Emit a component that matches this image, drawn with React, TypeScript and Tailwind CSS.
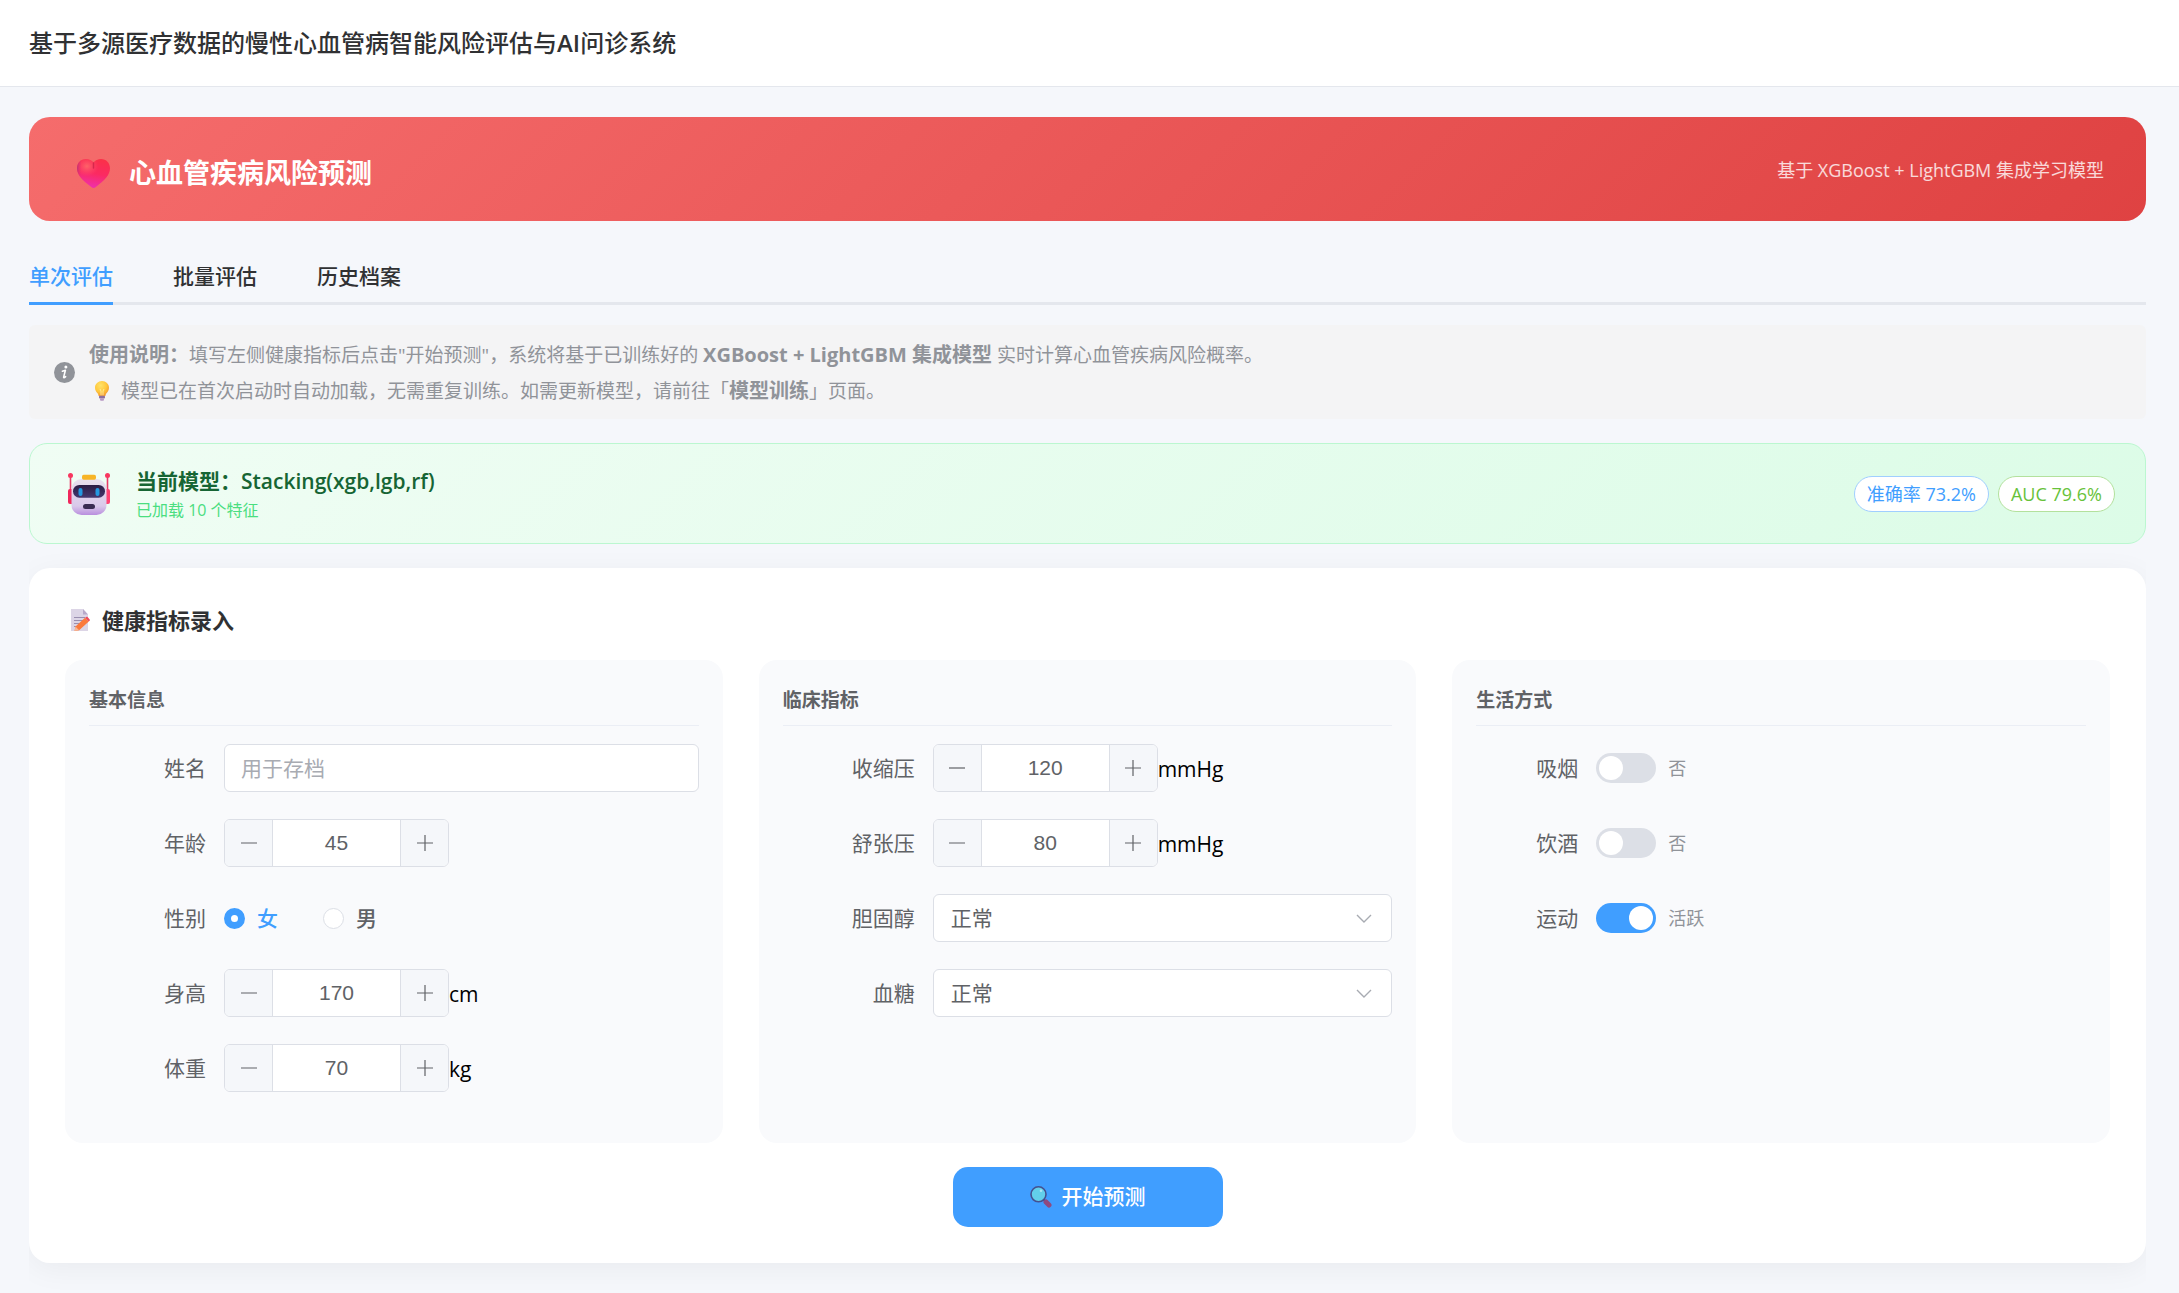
import React, { useState } from 'react';

const tabs = ['单次评估', '批量评估', '历史档案'];

const HeartIcon = () => (
  <svg viewBox="0 0 33 29" className="w-[33px] h-[29px]" aria-hidden="true">
    <defs>
      <linearGradient id="heart" x1="0.6" y1="0" x2="0.4" y2="1">
        <stop offset="0" stopColor="#fb3049" />
        <stop offset="0.5" stopColor="#fb2a62" />
        <stop offset="1" stopColor="#ee30b0" />
      </linearGradient>
      <radialGradient id="heartLight" cx="0.3" cy="0.25" r="0.35">
        <stop offset="0" stopColor="#ff6a68" stopOpacity="0.9" />
        <stop offset="1" stopColor="#ff4f75" stopOpacity="0" />
      </radialGradient>
      <linearGradient id="heartSide" x1="0" y1="0.4" x2="1" y2="0.5">
        <stop offset="0" stopColor="#b0347c" stopOpacity="0.75" />
        <stop offset="0.25" stopColor="#e0306f" stopOpacity="0" />
      </linearGradient>
    </defs>
    <path fill="url(#heart)" d="M16.5 3.5C14.7 1.2 12 0 9 0 3.6 0 0 4.200 0 9.300c0 6.700 5.500 12.200 14.300 18.800 1.600 1.200 2.900 1.200 4.500 0C27.500 21.500 33 16 33 9.300 33 4.200 29.400 0 24 0c-3 0-5.700 1.200-7.500 3.500z" />
    <path fill="url(#heartLight)" d="M16.5 3.5C14.7 1.2 12 0 9 0 3.6 0 0 4.200 0 9.300c0 6.700 5.500 12.200 14.300 18.800 1.600 1.200 2.900 1.200 4.500 0C27.500 21.500 33 16 33 9.300 33 4.200 29.400 0 24 0c-3 0-5.700 1.200-7.500 3.500z" />
    <path fill="url(#heartSide)" d="M16.500 3.500C14.700 1.200 12 0 9 0 3.600 0 0 4.200 0 9.300c0 6.700 5.500 12.200 14.300 18.800L16.500 29z" />
    <path d="M16.500 4v5" stroke="#c61f45" strokeWidth="1.400" strokeLinecap="round" opacity="0.7" />
  </svg>
);

const InfoIcon = () => (
  <svg viewBox="0 0 21 21" className="w-[21px] h-[21px] shrink-0" aria-hidden="true">
    <circle cx="10.500" cy="10.500" r="10.500" fill="#909399" />
    <circle cx="11.900" cy="5" r="1.500" fill="#fff" />
    <path d="M8.400 9.200l3-.9-1.700 6.600c-.2 1 .3 1.200 1.900-.3" fill="none" stroke="#fff" strokeWidth="1.600" strokeLinecap="round" strokeLinejoin="round" />
  </svg>
);

const BulbIcon = () => (
  <svg viewBox="0 0 14 20" className="w-[14px] h-5" aria-hidden="true">
    <defs>
      <radialGradient id="bulb" cx="0.4" cy="0.3" r="0.7">
        <stop offset="0" stopColor="#ffe36a" />
        <stop offset="0.6" stopColor="#ffc83d" />
        <stop offset="1" stopColor="#f59b2e" />
      </radialGradient>
    </defs>
    <path fill="url(#bulb)" d="M7 0C3.100 0 0 3 0 6.700c0 2.600 1.400 4.200 2.500 5.600.6.800 1 1.500 1.100 2.700h6.800c.1-1.200.5-1.900 1.100-2.700C12.600 10.900 14 9.300 14 6.700 14 3 10.900 0 7 0z" />
    <path d="M5 8l1 2v4.500M9 8l-1 2v4.500" fill="none" stroke="#fff0b0" strokeWidth="0.800" />
    <rect x="4" y="14.800" width="6" height="2.800" rx="1" fill="#8d6f9e" />
    <rect x="5" y="17.500" width="4" height="2.300" rx="1.100" fill="#b796c4" />
  </svg>
);

const RobotIcon = () => (
  <svg viewBox="0 0 42 42" className="w-[42px] h-[42px]" aria-hidden="true">
    <defs>
      <linearGradient id="robotHead" x1="0" y1="0" x2="0" y2="1">
        <stop offset="0" stopColor="#e9e0ee" />
        <stop offset="0.75" stopColor="#d9c9ea" />
        <stop offset="1" stopColor="#b98ede" />
      </linearGradient>
      <linearGradient id="robotVisor" x1="0" y1="0" x2="0" y2="1">
        <stop offset="0" stopColor="#2b1c44" />
        <stop offset="1" stopColor="#45386f" />
      </linearGradient>
    </defs>
    <path d="M2.500 3v16M39.500 3v16" stroke="#e63a68" strokeWidth="1.600" />
    <circle cx="2.500" cy="2.500" r="2.500" fill="#f8375f" />
    <circle cx="39.500" cy="2.500" r="2.500" fill="#f8375f" />
    <rect x="0" y="16" width="6" height="15" rx="2" fill="#f0285c" />
    <rect x="36" y="16" width="6" height="15" rx="2" fill="#ff4273" />
    <rect x="3.500" y="6" width="35" height="36" rx="10" fill="url(#robotHead)" />
    <rect x="14" y="1.700" width="14" height="5" rx="1.700" fill="#f7b526" />
    <rect x="5" y="12" width="32" height="12.700" rx="6.300" fill="url(#robotVisor)" />
    <rect x="10.500" y="15" width="4" height="8" rx="2" fill="#2498e0" />
    <rect x="27.500" y="15" width="4" height="8" rx="2" fill="#2498e0" />
    <rect x="15" y="31" width="12" height="5" rx="2.500" fill="#3a2c52" />
  </svg>
);

const MemoIcon = () => (
  <svg viewBox="0 0 19 22" className="w-[19px] h-[22px]" aria-hidden="true">
    <path d="M0 0h12l5 5.500V22H0z" fill="#dcd5e6" />
    <path d="M12 0l5 5.500h-5z" fill="#b7a9c9" />
    <path d="M3 8.500h11M3 11.500h11M3 14.500h8M3 17.500h5" stroke="#9a8fb0" strokeWidth="1.200" />
    <path d="M4.500 17.500L14 8.800l3.800 3.800-9.700 8.700-4.600.7z" fill="#fb7a3c" />
    <path d="M14 8.800l1.300-.8c.5-.3 1-.2 1.500.3l1.700 1.900c.5.500.5 1.100.1 1.500l-.8.900z" fill="#f04a5c" />
    <path d="M4.500 17.500l3.600 3.800-4.600.7z" fill="#f7b898" />
  </svg>
);

const SearchIcon = () => (
  <svg viewBox="0 0 22 22" className="w-[22px] h-[22px]" aria-hidden="true">
    <path d="M13.500 13.500l2 2" stroke="#45508f" strokeWidth="2" />
    <path d="M16 16l3 3" stroke="#8f4a80" strokeWidth="5" strokeLinecap="round" />
    <circle cx="8.500" cy="8.300" r="7.500" fill="#62cfea" stroke="#45508f" strokeWidth="1.600" />
    <circle cx="11" cy="4.800" r="1.300" fill="#a9e6f5" />
  </svg>
);

type RowProps = { label: string; id: string; labelClass: string; children: React.ReactNode };

const FormRow = ({ label, id, labelClass, children }: RowProps) => (
  <div className="flex items-center h-12 mb-[27px]">
    <label htmlFor={id} className={`${labelClass} shrink-0 pr-[18px] text-right text-[21px] leading-8 text-[#606266]`}>
      {label}
    </label>
    {children}
  </div>
);

type NumberFieldProps = { id: string; initial: number; unit?: string };

const NumberField = ({ id, initial, unit }: NumberFieldProps) => {
  const [value, setValue] = useState(initial);
  return (
    <>
      <div className="flex w-[225px] h-12 rounded-md border border-[#dcdfe6] bg-white overflow-hidden">
        <button type="button" aria-label="减少" onClick={() => setValue(value - 1)} className="w-12 shrink-0 flex items-center justify-center bg-[#f5f7fa] border-r border-[#dcdfe6]">
          <svg viewBox="0 0 18 18" className="w-[18px] h-[18px]"><path d="M1 9h16" stroke="#606266" strokeWidth="1.200" /></svg>
        </button>
        <input
          id={id}
          value={value}
          onChange={(e) => setValue(Number(e.target.value) || 0)}
          className="min-w-0 flex-1 text-center text-[21px] text-[#606266] font-['Liberation_Sans',sans-serif] outline-none"
        />
        <button type="button" aria-label="增加" onClick={() => setValue(value + 1)} className="w-12 shrink-0 flex items-center justify-center bg-[#f5f7fa] border-l border-[#dcdfe6]">
          <svg viewBox="0 0 18 18" className="w-[18px] h-[18px]"><path d="M1 9h16M9 1v16" stroke="#606266" strokeWidth="1.200" /></svg>
        </button>
      </div>
      {unit && <span className="pt-[2px] text-[21px] leading-8 text-black">{unit}</span>}
    </>
  );
};

const SelectField = ({ id }: { id: string }) => (
  <div className="relative flex-1">
    <select id={id} className="w-full h-12 pt-[2px] pl-[17px] pr-12 appearance-none rounded-md border border-[#dcdfe6] bg-white text-[21px] text-[#606266] outline-none">
      <option>正常</option>
      <option>偏高</option>
      <option>过高</option>
    </select>
    <svg viewBox="0 0 16 10" className="absolute right-5 top-5 w-4 h-[10px] pointer-events-none" aria-hidden="true">
      <path d="M1 1l7 7 7-7" fill="none" stroke="#a8abb2" strokeWidth="1.400" />
    </svg>
  </div>
);

type SwitchFieldProps = { id: string; initial?: boolean; on: string; off: string };

const SwitchField = ({ id, initial = false, on, off }: SwitchFieldProps) => {
  const [checked, setChecked] = useState(initial);
  return (
    <>
      <input
        id={id}
        type="checkbox"
        role="switch"
        checked={checked}
        onChange={(e) => setChecked(e.target.checked)}
        className="appearance-none w-[60px] h-[30px] p-[3px] rounded-full bg-[#dcdfe6] checked:bg-[#409eff] before:block before:size-6 before:rounded-full before:bg-white checked:before:ml-[30px]"
      />
      <span className="ml-3 text-lg text-[#909399]">{checked ? on : off}</span>
    </>
  );
};

const Panel = ({ title, children }: { title: string; children: React.ReactNode }) => (
  <section className="rounded-[18px] bg-[#f9fafc] p-6">
    <h3 className="mb-[18px] pb-[9px] border-b border-[#ebeef5] text-[19px] leading-8 font-semibold text-[#606266]">{title}</h3>
    {children}
  </section>
);

const App: React.FC = () => {
  const [activeTab, setActiveTab] = useState(tabs[0]);
  const [gender, setGender] = useState('女');

  return (
    <div className="min-h-screen bg-[#f5f7fb] font-['Open_Sans','Noto_Sans_CJK_SC',sans-serif] text-[#303133]">
      <header className="h-[87px] flex items-center px-[29px] bg-white border-b border-[#e4e7ed]">
        <h1 className="text-2xl font-medium">
          基于多源医疗数据的慢性心血管病智能风险评估与<span className="font-semibold">AI</span>问诊系统
        </h1>
      </header>

      <main className="pt-[30px] pb-[30px] pl-[29px] pr-[33px]">
        <div className="h-[104px] flex items-center justify-between pl-12 pr-[42px] rounded-[21px] text-white bg-[linear-gradient(135deg,#f56c6c,#df4242)]">
          <div className="flex items-center gap-[19px] pt-2">
            <HeartIcon />
            <h2 className="text-[27px] leading-10 font-bold">心血管疾病风险预测</h2>
          </div>
          <p className="pt-[2px] text-lg text-white/80">基于 XGBoost + LightGBM 集成学习模型</p>
        </div>

        <nav className="mt-[30px] flex gap-[60px] h-[54px] shadow-[inset_0_-3px_0_#e4e7ed]">
          {tabs.map((tab) => (
            <button
              key={tab}
              type="button"
              onClick={() => setActiveTab(tab)}
              className={
                tab === activeTab
                  ? 'text-[21px] font-medium border-b-[3px] border-[#409eff] text-[#409eff]'
                  : 'text-[21px] font-medium border-b-[3px] border-transparent'
              }
            >
              {tab}
            </button>
          ))}
        </nav>

        <div className="mt-5 h-[94px] flex items-center gap-[14px] px-[25px] rounded-md bg-[#f4f4f5] text-[#909399]">
          <InfoIcon />
          <div className="pt-[2px] text-[19px] leading-[35px] [&_strong]:text-[20px]">
            <p>
              <strong>使用说明：</strong>填写左侧健康指标后点击"开始预测"，系统将基于已训练好的 <strong>XGBoost + LightGBM 集成模型</strong> 实时计算心血管疾病风险概率。
            </p>
            <p className="flex items-center">
              <span className="pl-[6px] pr-3"><BulbIcon /></span>
              <span>模型已在首次启动时自动加载，无需重复训练。如需更新模型，请前往「<strong>模型训练</strong>」页面。</span>
            </p>
          </div>
        </div>

        <div className="mt-6 h-[101px] flex items-center justify-between pl-[38px] pr-[30px] rounded-[18px] border border-[#bbf7d0] bg-[linear-gradient(135deg,#f0fdf4,#dcfce7)]">
          <div className="flex items-center gap-[26px]">
            <RobotIcon />
            <div>
              <p className="text-[21px] leading-8 font-semibold text-[#166534]">当前模型：Stacking(xgb,lgb,rf)</p>
              <p className="text-base leading-[26px] text-[#4ade80]">已加载 10 个特征</p>
            </div>
          </div>
          <div className="flex gap-[9px] text-lg">
            <span className="h-9 flex items-center px-3 rounded-full border border-[#a0cfff] bg-white text-[#409eff]">准确率 73.2%</span>
            <span className="h-9 flex items-center px-3 rounded-full border border-[#b3e19d] bg-white text-[#67c23a]">AUC 79.6%</span>
          </div>
        </div>

        <div className="mt-6 p-9 rounded-[21px] bg-white shadow-[0_6px_30px_rgba(0,0,0,0.05)] [clip-path:inset(-24px_0_-30px_0)]">
          <h2 className="mb-6 h-8 flex items-center gap-3 pl-[6px] text-[22px] font-semibold">
            <MemoIcon />
            健康指标录入
          </h2>

          <form onSubmit={(e) => e.preventDefault()}>
            <div className="grid grid-cols-3 gap-9">
              <Panel title="基本信息">
                <FormRow label="姓名" id="name" labelClass="w-[135px]">
                  <input id="name" placeholder="用于存档" className="min-w-0 flex-1 h-12 px-4 rounded-md border border-[#dcdfe6] bg-white text-[21px] text-[#606266] placeholder:text-[#a8abb2] outline-none" />
                </FormRow>
                <FormRow label="年龄" id="age" labelClass="w-[135px]">
                  <NumberField id="age" initial={45} />
                </FormRow>
                <FormRow label="性别" id="gender-女" labelClass="w-[135px]">
                  <div className="flex gap-[45px]">
                    {['女', '男'].map((g) => (
                      <label key={g} className="flex items-center gap-3 text-[21px] leading-8 font-medium text-[#606266] has-checked:text-[#409eff]">
                        <input
                          id={`gender-${g}`}
                          type="radio"
                          name="gender"
                          checked={gender === g}
                          onChange={() => setGender(g)}
                          className="appearance-none size-[21px] rounded-full border border-[#dcdfe6] bg-white checked:border-[7px] checked:border-[#409eff]"
                        />
                        {g}
                      </label>
                    ))}
                  </div>
                </FormRow>
                <FormRow label="身高" id="height" labelClass="w-[135px]">
                  <NumberField id="height" initial={170} unit="cm" />
                </FormRow>
                <FormRow label="体重" id="weight" labelClass="w-[135px]">
                  <NumberField id="weight" initial={70} unit="kg" />
                </FormRow>
              </Panel>

              <Panel title="临床指标">
                <FormRow label="收缩压" id="systolic" labelClass="w-[150px]">
                  <NumberField id="systolic" initial={120} unit="mmHg" />
                </FormRow>
                <FormRow label="舒张压" id="diastolic" labelClass="w-[150px]">
                  <NumberField id="diastolic" initial={80} unit="mmHg" />
                </FormRow>
                <FormRow label="胆固醇" id="cholesterol" labelClass="w-[150px]">
                  <SelectField id="cholesterol" />
                </FormRow>
                <FormRow label="血糖" id="glucose" labelClass="w-[150px]">
                  <SelectField id="glucose" />
                </FormRow>
              </Panel>

              <Panel title="生活方式">
                <FormRow label="吸烟" id="smoke" labelClass="w-[120px]">
                  <SwitchField id="smoke" on="是" off="否" />
                </FormRow>
                <FormRow label="饮酒" id="alcohol" labelClass="w-[120px]">
                  <SwitchField id="alcohol" on="是" off="否" />
                </FormRow>
                <FormRow label="运动" id="active" labelClass="w-[120px]">
                  <SwitchField id="active" initial on="活跃" off="不活跃" />
                </FormRow>
              </Panel>
            </div>

            <button type="submit" className="mt-6 mx-auto w-[270px] h-[60px] flex items-center justify-center gap-[10px] rounded-[15px] bg-[#409eff] text-white text-[21px] font-medium">
              <SearchIcon />
              开始预测
            </button>
          </form>
        </div>
      </main>
    </div>
  );
};

export default App;
